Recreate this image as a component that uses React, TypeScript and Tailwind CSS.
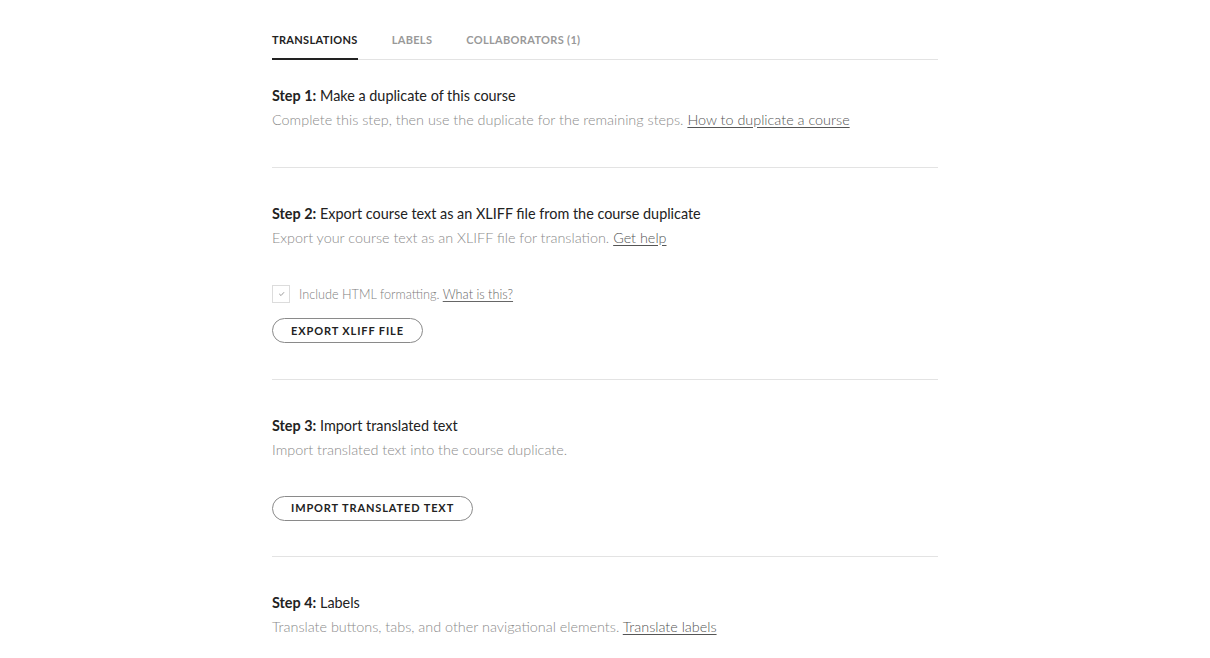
import React from "react";

const Step = ({
  num,
  title,
  desc,
  link,
  children,
  last,
  pb = "pb-[36px]",
}: {
  num: number;
  title: string;
  desc: string;
  link?: string;
  children?: React.ReactNode;
  last?: boolean;
  pb?: string;
}) => {
  return (
    <div className={`${last ? "" : "border-b border-[#e3e3e3]"} pt-[36px] ${pb}`}>
      <div className="text-[14.4px] leading-5 text-[#222]">
        <span className="font-bold">Step {num}:</span> {title}
      </div>
      <div className="mt-1 text-[14.4px] font-light leading-5 text-[#8a8a8a]">
        {desc}
        {link && (
          <>
            {" "}
            <a className="text-[#555] underline underline-offset-2">{link}</a>
          </>
        )}
      </div>
      {children}
    </div>
  );
};

const PillButton = ({ label }: { label: string }) => (
  <button className="h-[25px] rounded-full border border-[#8a8a8a] px-[18px] text-[11px] font-bold tracking-[0.08em] text-[#222]">
    {label}
  </button>
);

export default function App() {
  return (
    <div className="min-h-screen bg-white font-['Lato','Liberation_Sans',sans-serif]">
      <div className="mx-auto w-[666px] pt-[32px]">
        <div className="flex gap-[34px] border-b border-[#e3e3e3] text-[11px] font-bold tracking-[0.03em]">
          <div className="border-b-2 border-[#222] pb-[9px] -mb-px text-[#222]">TRANSLATIONS</div>
          <div className="pb-[9px] text-[#999]">LABELS</div>
          <div className="pb-[9px] text-[#999]">COLLABORATORS (1)</div>
        </div>

        <div className="-mt-[10px]">
          <Step
            num={1}
            title="Make a duplicate of this course"
            desc="Complete this step, then use the duplicate for the remaining steps."
            link="How to duplicate a course"
            pb="pb-[37px]"
          />
        </div>

        <Step
          num={2}
          title="Export course text as an XLIFF file from the course duplicate"
          desc="Export your course text as an XLIFF file for translation."
          link="Get help"
        >
          <label className="mt-[36px] flex items-center gap-[9px] text-[12.7px] font-light leading-5 text-[#808080]">
            <span className="flex h-[18px] w-[18px] items-center justify-center border border-[#dcdcdc]">
              <svg width="9" height="9" viewBox="0 0 10 10" fill="none" stroke="#9a9a9a" strokeWidth="1.1">
                <path d="M2.5 5.5 L4.5 7.3 L7.8 3.6" />
              </svg>
            </span>
            <span>
              Include HTML formatting.{" "}
              <a className="text-[#666] underline underline-offset-2">What is this?</a>
            </span>
          </label>
          <div className="mt-[13px]">
            <PillButton label="EXPORT XLIFF FILE" />
          </div>
        </Step>

        <Step
          num={3}
          title="Import translated text"
          desc="Import translated text into the course duplicate."
          pb="pb-[35px]"
        >
          <div className="mt-[34px]">
            <PillButton label="IMPORT TRANSLATED TEXT" />
          </div>
        </Step>

        <Step
          num={4}
          title="Labels"
          desc="Translate buttons, tabs, and other navigational elements."
          link="Translate labels"
          last
        />
      </div>
    </div>
  );
}
